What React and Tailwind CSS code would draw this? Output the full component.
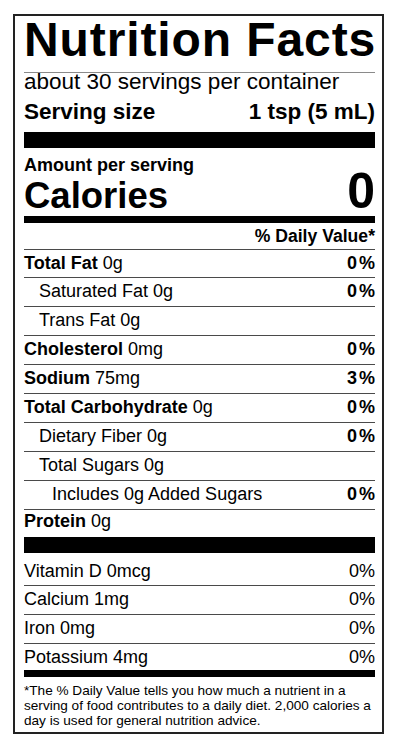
export default function App() {
  const rowLine = "border-b border-[#4a4a4a]";
  return (
    <div className="min-h-[751px] bg-white pt-[14px] pl-[13px] font-['Liberation_Sans',Arial,sans-serif] text-black">
      <div className="w-[371px] border-2 border-[#222] pl-[9px] pr-[7px] pb-[4px]">
        <div className="h-[57px] border-b border-[#8a8a8a] text-[48px] leading-[48px] font-bold tracking-[0.9px] whitespace-nowrap">
          Nutrition Facts
        </div>
        <div className="text-[22.5px] leading-[18px] whitespace-nowrap">about 30 servings per container</div>
        <div className="mt-[6px] flex justify-between text-[22.5px] leading-[30px] font-bold whitespace-nowrap">
          <span>Serving size</span>
          <span>1 tsp (5 mL)</span>
        </div>
        <div className="mt-[5px] h-[16px] bg-black" />
        <div className="pt-[7px] text-[18px] leading-[20px] font-bold">Amount per serving</div>
        <div className="flex h-[41px] items-baseline justify-between font-bold">
          <span className="text-[36.5px] leading-[32px]">Calories</span>
          <span className="text-[50px] leading-[32px]">0</span>
        </div>
        <div className="h-[7px] bg-black" />
        <div className={`h-[27px] ${rowLine} text-right text-[17.6px] leading-[26px] font-bold`}>% Daily Value*</div>

        <div className="text-[18px] leading-[26px]">
          <div className={`flex h-[28px] justify-between ${rowLine}`}>
            <span><b>Total Fat</b> 0g</span>
            <b>0<span className="ml-[2px]">%</span></b>
          </div>
          <div className={`flex h-[29px] justify-between pl-[15px] ${rowLine}`}>
            <span>Saturated Fat 0g</span>
            <b>0<span className="ml-[2px]">%</span></b>
          </div>
          <div className={`flex h-[29px] justify-between pl-[15px] ${rowLine}`}>
            <span>Trans Fat 0g</span>
          </div>
          <div className={`flex h-[29px] justify-between ${rowLine}`}>
            <span><b>Cholesterol</b> 0mg</span>
            <b>0<span className="ml-[2px]">%</span></b>
          </div>
          <div className={`flex h-[29px] justify-between ${rowLine}`}>
            <span><b>Sodium</b> 75mg</span>
            <b>3<span className="ml-[2px]">%</span></b>
          </div>
          <div className={`flex h-[29px] justify-between ${rowLine}`}>
            <span><b>Total Carbohydrate</b> 0g</span>
            <b>0<span className="ml-[2px]">%</span></b>
          </div>
          <div className={`flex h-[29px] justify-between pl-[15px] ${rowLine}`}>
            <span>Dietary Fiber 0g</span>
            <b>0<span className="ml-[2px]">%</span></b>
          </div>
          <div className={`flex h-[29px] justify-between pl-[15px] ${rowLine}`}>
            <span>Total Sugars 0g</span>
          </div>
          <div className={`flex h-[29px] justify-between pl-[28px] ${rowLine}`}>
            <span>Includes 0g Added Sugars</span>
            <b>0<span className="ml-[2px]">%</span></b>
          </div>
          <div className="flex h-[27px] justify-between leading-[22px]">
            <span><b>Protein</b> 0g</span>
          </div>
        </div>
        <div className="h-[16px] bg-black" />

        <div className="text-[18px] leading-[26px]">
          <div className={`flex h-[33px] justify-between pt-[5px] ${rowLine}`}>
            <span>Vitamin D 0mcg</span>
            <span>0%</span>
          </div>
          <div className={`flex h-[29px] justify-between ${rowLine}`}>
            <span>Calcium 1mg</span>
            <span>0%</span>
          </div>
          <div className={`flex h-[29px] justify-between ${rowLine}`}>
            <span>Iron 0mg</span>
            <span>0%</span>
          </div>
          <div className="flex h-[26px] justify-between">
            <span>Potassium 4mg</span>
            <span>0%</span>
          </div>
        </div>
        <div className="h-[7px] bg-black" />
        <p className="pt-[6px] text-[13.6px] leading-[15px] whitespace-nowrap">
          *The % Daily Value tells you how much a nutrient in a
          <br />
          serving of food contributes to a daily diet. 2,000 calories a
          <br />
          day is used for general nutrition advice.
        </p>
      </div>
    </div>
  );
}
